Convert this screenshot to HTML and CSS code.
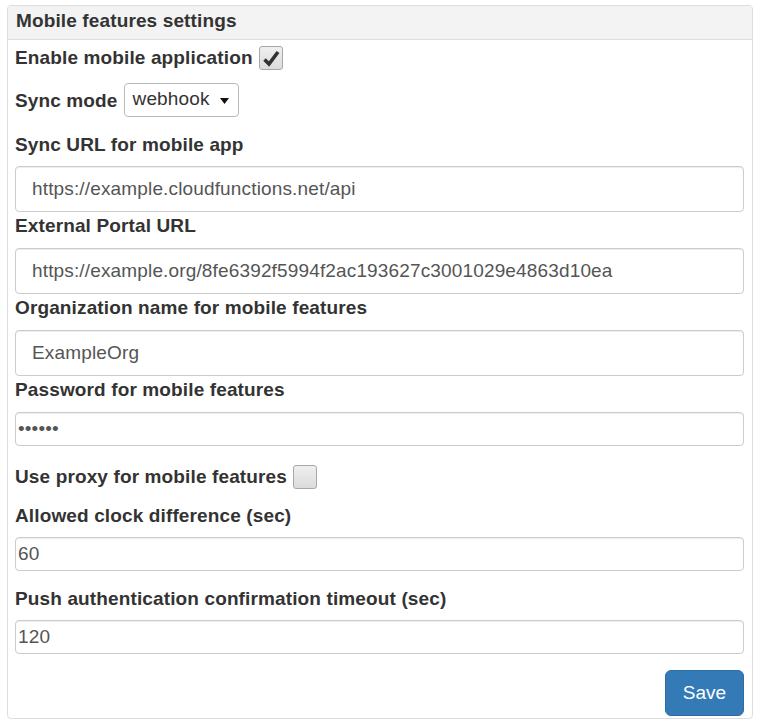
FILE: index.html
```html
<!DOCTYPE html>
<html>
<head>
<meta charset="utf-8">
<link rel="stylesheet" href="styles.css">
</head>
<body>
<div class="page">
  <div class="panel">
    <div class="panel-heading">Mobile features settings</div>
    <div class="panel-body">
      <div class="inline-row row-enable">
        <span class="lbl">Enable mobile application</span>
        <span class="cb checked"><svg width="22" height="22" viewBox="0 0 22 22"><path d="M4.5 12.5 L9 17 L18 5" fill="none" stroke="#333" stroke-width="3.6" stroke-linejoin="miter" stroke-linecap="butt"/></svg></span>
      </div>
      <div class="inline-row row-sync">
        <span class="lbl lbl-low">Sync mode</span>
        <span class="select"><span class="select-text">webhook</span><svg class="caret" width="9" height="6" viewBox="0 0 9 6"><path d="M0 0 H9 L4.5 6 Z" fill="#111"/></svg></span>
      </div>
      <label class="lbl block first">Sync URL for mobile app</label>
      <input class="fc fc-lg" type="text" value="https://example.cloudfunctions.net/api">
      <label class="lbl block tight">External Portal URL</label>
      <input class="fc fc-lg" type="text" value="https://example.org/8fe6392f5994f2ac193627c3001029e4863d10ea">
      <label class="lbl block tight">Organization name for mobile features</label>
      <input class="fc fc-lg" type="text" value="ExampleOrg">
      <label class="lbl block tight">Password for mobile features</label>
      <input class="fc fc-sm" type="password" value="secret">
      <div class="inline-row row-proxy">
        <span class="lbl">Use proxy for mobile features</span>
        <span class="cb"></span>
      </div>
      <label class="lbl block after-row">Allowed clock difference (sec)</label>
      <input class="fc fc-sm" type="text" value="60">
      <label class="lbl block after-sm">Push authentication confirmation timeout (sec)</label>
      <input class="fc fc-sm" type="text" value="120">
      <div class="actions">
        <button class="btn" type="button">Save</button>
      </div>
    </div>
  </div>
</div>
</body>
</html>
```

FILE: styles.css
```css
html, body {
  margin: 0;
  padding: 0;
  background: #fff;
}
.page {
  padding: 5px 0 0 7px;
  font-family: "Liberation Sans", Arial, sans-serif;
  color: #333;
  letter-spacing: 0.13px;
}
.panel {
  width: 746px;
  box-sizing: border-box;
  border: 1px solid #ddd;
  border-radius: 4px;
  background: #fff;
}
.panel-heading {
  background: #f3f3f3;
  border-bottom: 1px solid #ddd;
  border-radius: 3px 3px 0 0;
  font-size: 19px;
  font-weight: bold;
  line-height: 29px;
  padding: 0 8px 4px;
}
.panel-body {
  padding: 0 8px 2px 7px;
}
.lbl {
  font-size: 19px;
  font-weight: bold;
  line-height: 22px;
  color: #333;
}
.block {
  display: block;
  margin-bottom: 11px;
}
.first { margin-top: 17px; margin-bottom: 10px; }
.tight { margin-top: 3px; }
.after-row { margin-top: 16px; margin-bottom: 10px; }
.after-sm { margin-top: 17px; margin-bottom: 10px; }
.inline-row {
  display: flex;
  align-items: center;
  gap: 6px;
}
.row-enable { margin-top: 6px; }
.row-sync { margin-top: 13px; align-items: flex-end; }
.row-proxy { margin-top: 19px; }
.lbl-low { margin-bottom: 5px; }
.cb {
  width: 24px;
  height: 24px;
  box-sizing: border-box;
  border: 1px solid #a8a8a8;
  border-radius: 3px;
  background: linear-gradient(#efefef, #dcdcdc);
  display: flex;
  align-items: center;
  justify-content: center;
}
.select {
  height: 34px;
  width: 115px;
  box-sizing: border-box;
  border: 1px solid #bbb;
  border-radius: 4px;
  display: flex;
  align-items: center;
  padding: 0 9px 0 8px;
  justify-content: space-between;
  background: #fff;
}
.select-text {
  font-size: 19px;
  color: #333;
  line-height: 22px;
  margin-top: -3px;
}
.caret {
  margin-top: 1px;
}
.fc {
  display: block;
  width: 729px;
  box-sizing: border-box;
  border: 1px solid #ccc;
  border-radius: 4px;
  box-shadow: inset 0 1px 1px rgba(0,0,0,0.075);
  font-family: "Liberation Sans", Arial, sans-serif;
  font-size: 19px;
  letter-spacing: 0.15px;
  color: #555;
  background: #fff;
  margin: 0;
  outline: none;
}
.fc-lg {
  height: 46px;
  padding: 0 16px;
}
.fc-sm {
  height: 34px;
  padding: 0 2px;
}
.actions {
  display: flex;
  justify-content: flex-end;
  margin-top: 16px;
}
.btn {
  height: 46px;
  width: 79px;
  box-sizing: border-box;
  background: #337ab7;
  border: 1px solid #2e6da4;
  border-radius: 6px;
  color: #fff;
  font-family: "Liberation Sans", Arial, sans-serif;
  font-size: 19px;
  padding: 0;
}
```
